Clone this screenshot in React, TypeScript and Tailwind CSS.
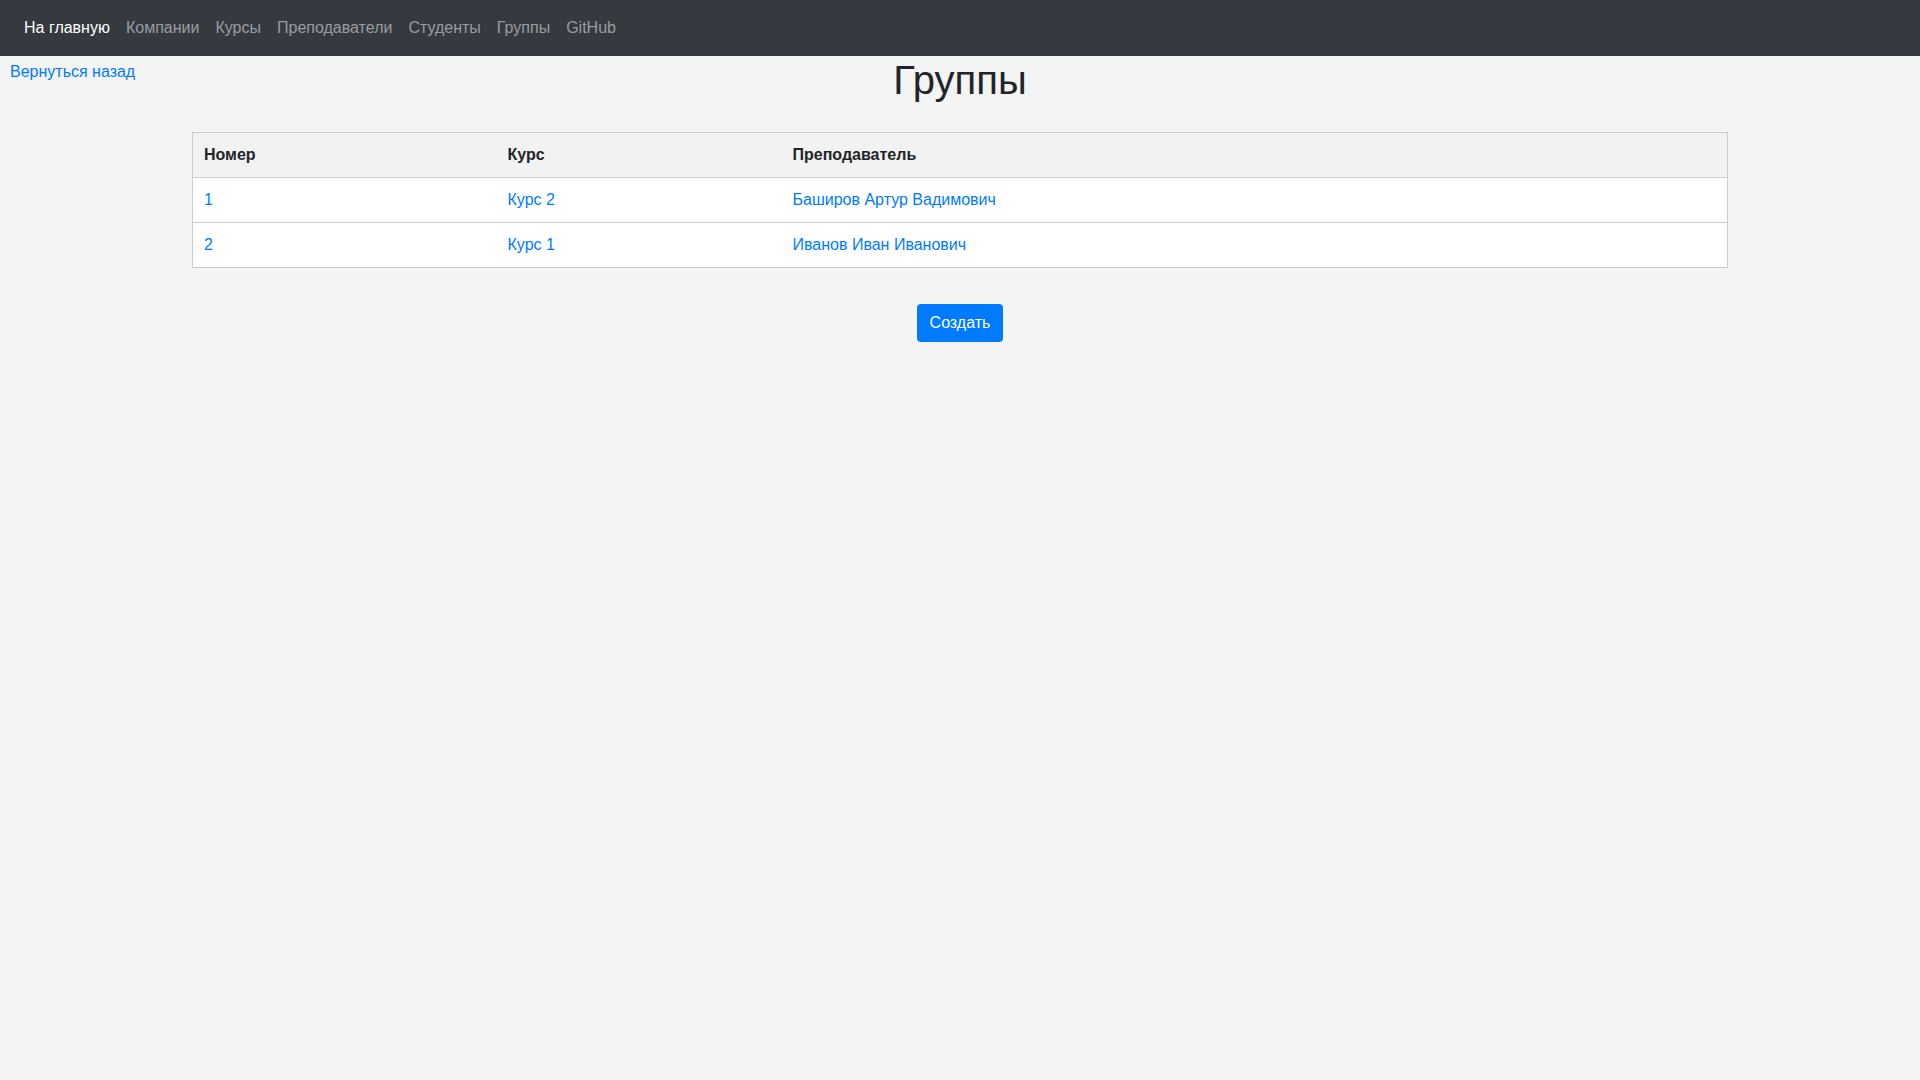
import React from 'react';

const navItems = [
  { label: 'На главную', active: true },
  { label: 'Компании' },
  { label: 'Курсы' },
  { label: 'Преподаватели' },
  { label: 'Студенты' },
  { label: 'Группы' },
  { label: 'GitHub' },
];

const groups = [
  { id: '1', course: 'Курс 2', teacher: 'Баширов Артур Вадимович' },
  { id: '2', course: 'Курс 1', teacher: 'Иванов Иван Иванович' },
];

export default function App() {
  return (
    <div className="min-h-screen bg-[#f4f4f4] font-['Liberation_Sans',Arial,sans-serif] text-[16px] leading-6 text-[#212529]">
      <nav className="flex h-[56px] items-center bg-[#343a40] px-4">
        {navItems.map((item) => (
          <a
            key={item.label}
            href="#"
            className={`px-2 ${item.active ? 'text-white' : 'text-[#9a9da0]'}`}
          >
            {item.label}
          </a>
        ))}
      </nav>

      <div className="grid grid-cols-[1fr_auto_1fr]">
        <div className="pl-[10px] pt-[4px]">
          <a href="#" className="text-[#007bff]">
            Вернуться назад
          </a>
        </div>
        <h1 className="text-[40px] leading-[48px] font-normal">Группы</h1>
        <div />
      </div>

      <div className="mx-auto mt-[28px] w-[80%]">
        <table className="w-full border-collapse border border-[#cccccc] bg-white">
          <thead>
            <tr className="bg-[#f2f2f2]">
              <th className="h-[45px] w-[303px] border-b border-[#cccccc] pl-[11px] pr-3 text-left font-bold">Номер</th>
              <th className="h-[45px] w-[285px] border-b border-[#cccccc] px-3 text-left font-bold">Курс</th>
              <th className="h-[45px] border-b border-[#cccccc] px-3 text-left font-bold">Преподаватель</th>
            </tr>
          </thead>
          <tbody>
            {groups.map((g) => (
              <tr key={g.id}>
                <td className="h-[45px] border-b border-[#cccccc] pl-[11px] pr-3">
                  <a href="#" className="text-[#007bff]">{g.id}</a>
                </td>
                <td className="h-[45px] border-b border-[#cccccc] px-3">
                  <a href="#" className="text-[#007bff]">{g.course}</a>
                </td>
                <td className="h-[45px] border-b border-[#cccccc] px-3">
                  <a href="#" className="text-[#007bff]">{g.teacher}</a>
                </td>
              </tr>
            ))}
          </tbody>
        </table>
      </div>

      <div className="mt-[36px] flex justify-center">
        <button className="h-[38px] rounded-[4px] bg-[#007bff] px-[13px] text-white">Создать</button>
      </div>
    </div>
  );
}
